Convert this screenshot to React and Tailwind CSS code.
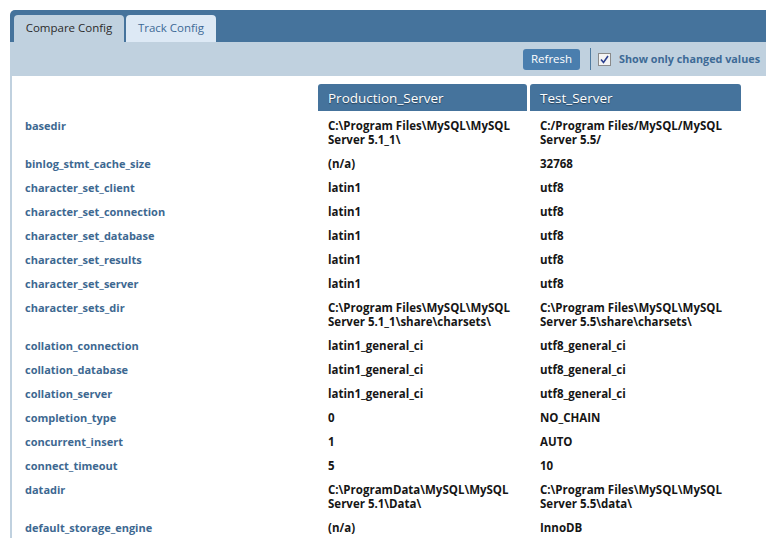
import React from 'react';

const rows = [
  ['basedir', 'C:\\Program Files\\MySQL\\MySQL Server 5.1_1\\', 'C:/Program Files/MySQL/MySQL Server 5.5/'],
  ['binlog_stmt_cache_size', '(n/a)', '32768'],
  ['character_set_client', 'latin1', 'utf8'],
  ['character_set_connection', 'latin1', 'utf8'],
  ['character_set_database', 'latin1', 'utf8'],
  ['character_set_results', 'latin1', 'utf8'],
  ['character_set_server', 'latin1', 'utf8'],
  ['character_sets_dir', 'C:\\Program Files\\MySQL\\MySQL Server 5.1_1\\share\\charsets\\', 'C:\\Program Files\\MySQL\\MySQL Server 5.5\\share\\charsets\\'],
  ['collation_connection', 'latin1_general_ci', 'utf8_general_ci'],
  ['collation_database', 'latin1_general_ci', 'utf8_general_ci'],
  ['collation_server', 'latin1_general_ci', 'utf8_general_ci'],
  ['completion_type', '0', 'NO_CHAIN'],
  ['concurrent_insert', '1', 'AUTO'],
  ['connect_timeout', '5', '10'],
  ['datadir', 'C:\\ProgramData\\MySQL\\MySQL Server 5.1\\Data\\', 'C:\\Program Files\\MySQL\\MySQL Server 5.5\\data\\'],
  ['default_storage_engine', '(n/a)', 'InnoDB'],
];

const App = () => {
  return (
    <div className="w-[766px] h-[538px] overflow-hidden bg-white pt-[10px] pl-[10px] font-['Open_Sans',sans-serif]">
      {/* tab strip */}
      <div className="h-[32px] bg-[#45739c] rounded-tl-[5px] flex items-end pl-[4px] gap-[2px]">
        <div className="w-[110px] h-[27px] pb-[2px] rounded-t-[4px] bg-[#c0d1df] text-[11.5px] text-[#2b2b2b] flex items-center justify-center">
          Compare Config
        </div>
        <div className="w-[90px] h-[27px] pb-[2px] rounded-t-[4px] bg-[#dde9f5] text-[11.5px] text-[#3d6a96] flex items-center justify-center">
          Track Config
        </div>
      </div>

      {/* toolbar */}
      <div className="h-[34px] bg-[#c0d1df] flex items-center justify-end pr-[6px]">
        <button className="w-[57px] h-[21px] rounded-[3px] bg-[#4a7eae] text-white text-[11.5px] leading-[20px]">
          Refresh
        </button>
        <div className="w-[1px] h-[22px] bg-[#4e7aa0] ml-[10px] mr-[7px]" />
        <span className="w-[13px] h-[13px] border border-[#8a8a8a] bg-[#f4f4f4] flex items-center justify-center">
          <svg width="9" height="9" viewBox="0 0 9 9">
            <path d="M1 4.5 L3.5 7.5 L8 1" fill="none" stroke="#2b3f8f" strokeWidth="1.6" />
          </svg>
        </span>
        <span className="ml-[8px] text-[10.8px] font-bold text-[#3d6a96]">Show only changed values</span>
      </div>

      {/* comparison table */}
      <div className="border-l-2 border-[#c0d1df] pt-[8px] pl-[13px]">
        <div className="grid grid-cols-[290px_209px_211px] gap-x-[3px] text-[11px] leading-[14px]">
          <div />
          <div className="h-[27px] rounded-t-[3px] bg-[#45739c] text-white text-[13.5px] px-[10px] flex items-center [text-shadow:0_1px_1px_rgba(0,0,0,0.45)]">
            Production_Server
          </div>
          <div className="h-[27px] rounded-t-[3px] bg-[#45739c] text-white text-[13.5px] px-[10px] flex items-center [text-shadow:0_1px_1px_rgba(0,0,0,0.45)]">
            Test_Server
          </div>
          <div className="col-span-3 h-[3px]" />
          {rows.map(([name, prod, test]) => (
            <React.Fragment key={name}>
              <div className="py-[5px] font-bold text-[#3d6891]">{name}</div>
              <div className="py-[5px] px-[10px] text-[11.5px] font-bold text-[#161616]">{prod}</div>
              <div className="py-[5px] px-[10px] text-[11.5px] font-bold text-[#161616]">{test}</div>
            </React.Fragment>
          ))}
        </div>
      </div>
    </div>
  );
};

export default App;
